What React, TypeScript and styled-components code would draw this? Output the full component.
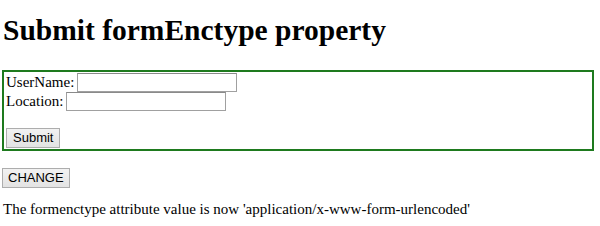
import * as React from 'react';
import styled, { createGlobalStyle } from 'styled-components';

const GlobalStyle = createGlobalStyle`
    body {
        margin: 0;
        padding: 0 6px 0 2px;
        background: #ffffff;
        color: #000000;
        font-family: 'Liberation Serif', 'Times New Roman', serif;
        font-size: 15px;
    }
`

const Title = styled.h1`
    margin: 0 0 23px 0;
    padding: 13px 0 0 1px;
    font-size: 29.5px;
    font-weight: bold;
    line-height: 34px;
`

const Form = styled.form`
    border: 2px solid #1e7a1e;
    padding: 1px 2px 1px 2px;
    margin: 0;
`

const Row = styled.div`
    display: flex;
    align-items: center;
    height: 19px;
    line-height: 19px;
`

const Label = styled.span`
    margin-right: 3px;
`

const TextInput = styled.input`
    box-sizing: border-box;
    width: 160px;
    height: 19px;
    border: 1px solid #a0a0a0;
    border-top-color: #8a8a8a;
    padding: 0 2px;
    margin: 0;
    font-size: 13px;
`

const Spacer = styled.div`
    height: 17px;
`

const Button = styled.button<{ $wide?: boolean }>`
    box-sizing: border-box;
    height: 20px;
    padding: 0 ${p => (p.$wide ? '5px' : '6px')};
    margin: 0;
    border: 1px solid #adadad;
    border-radius: 0;
    background: linear-gradient(#f2f2f2, #e3e3e3);
    font-family: 'Liberation Sans', Arial, sans-serif;
    font-size: 13px;
    color: #000;
    line-height: 18px;
`

const ButtonRow = styled.div`
    padding-top: 17px;
`

const Message = styled.p`
    margin: 13px 0 0 1px;
    font-size: 15px;
    line-height: 17px;
`

export default function App() {
    return (
        <>
            <GlobalStyle />
            <Title>Submit formEnctype property</Title>
            <Form onSubmit={e => e.preventDefault()}>
                <Row>
                    <Label>UserName:</Label>
                    <TextInput type="text" />
                </Row>
                <Row>
                    <Label>Location:</Label>
                    <TextInput type="text" />
                </Row>
                <Spacer />
                <Button type="submit">Submit</Button>
            </Form>
            <ButtonRow>
                <Button type="button" $wide>CHANGE</Button>
            </ButtonRow>
            <Message>The formenctype attribute value is now 'application/x-www-form-urlencoded'</Message>
        </>
    );
}
